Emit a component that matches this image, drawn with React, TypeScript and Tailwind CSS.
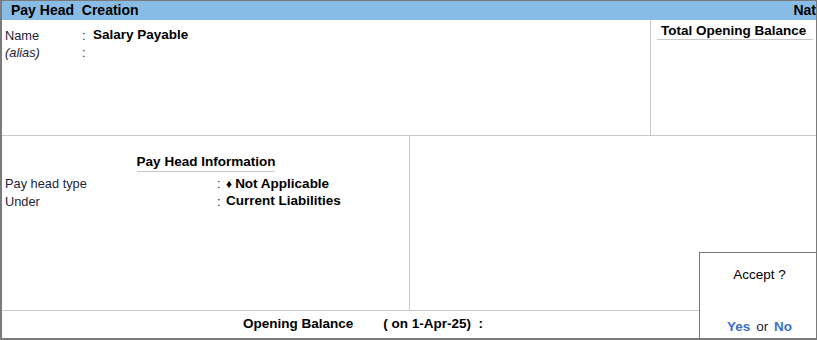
import React from "react";

const font = { fontFamily: '"Liberation Sans", Arial, sans-serif' };

function Row({ label, value, italic }: { label: string; value?: string; italic?: boolean }) {
  return (
    <div className="flex h-[17px] items-center">
      <span className={`w-[77px] text-[12.8px] text-[#1e1e3c] ${italic ? "italic" : ""}`}>{label}</span>
      <span className="w-[11px] text-[12.8px] text-[#1e1e3c]">:</span>
      {value && <span className="text-[13.5px] font-bold text-black">{value}</span>}
    </div>
  );
}

export default function App() {
  return (
    <div
      className="relative w-[817px] h-[340px] overflow-hidden bg-white border-t border-l-2 border-r border-b-2 border-[#7a7a7a] flex flex-col"
      style={font}
    >
      {/* title bar */}
      <div className="h-[19px] shrink-0 bg-[#89bce4] flex items-center justify-between pl-[9px] pr-0">
        <span className="text-[14px] font-bold text-black whitespace-pre">Pay Head  Creation</span>
        <span className="text-[14px] font-bold text-black">Nat</span>
      </div>

      {/* name area */}
      <div className="h-[116px] shrink-0 flex border-b border-[#c8c8c8]">
        <div className="flex-1 pl-[3px] pt-[7px]">
          <Row label="Name" value="Salary Payable" />
          <Row label="(alias)" italic />
        </div>
        <div className="w-[166px] border-l border-[#c8c8c8] pt-[3px] pl-[6px] pr-[3px]">
          <div className="border-b border-[#c8c8c8] pl-[4px] pb-[1px] text-[13.5px] font-bold text-black leading-[15px] whitespace-nowrap">
            Total Opening Balance
          </div>
        </div>
      </div>

      {/* info area */}
      <div className="h-[174px] shrink-0 flex">
        <div className="w-[408px] border-r border-[#c8c8c8] pl-[3px] pt-[18px]">
          <div className="flex justify-center">
            <span className="text-[13.5px] font-bold text-black border-b border-[#c8c8c8] leading-[16px] pb-[1px] mr-[2px]">
              Pay Head Information
            </span>
          </div>
          <div className="mt-[3px] flex h-[18px] items-center">
            <span className="w-[212px] text-[12.8px] text-[#1e1e3c]">Pay head type</span>
            <span className="w-[9px] text-[12.8px] text-[#1e1e3c]">:</span>
            <span className="text-[13.5px] font-bold text-black">
              <span className="text-[12px] mr-[3px]">♦</span>Not Applicable
            </span>
          </div>
          <div className="flex h-[17px] items-center">
            <span className="w-[212px] text-[12.8px] text-[#1e1e3c]">Under</span>
            <span className="w-[9px] text-[12.8px] text-[#1e1e3c]">:</span>
            <span className="text-[13.5px] font-bold text-black">Current Liabilities</span>
          </div>
        </div>
        <div className="flex-1" />
      </div>

      {/* opening balance */}
      <div className="flex-1 border-t border-[#c8c8c8] flex items-start pt-[3px] pl-[241px]">
        <span className="text-[13.5px] font-bold text-black">Opening Balance</span>
        <span className="ml-[30px] text-[13.5px] font-bold text-black whitespace-pre">( on 1-Apr-25)  :</span>
      </div>

      {/* accept prompt */}
      <div className="absolute left-[697px] top-[251px] w-[120px] h-[89px] bg-white border-t border-l border-[#7a7a7a] flex flex-col items-center">
        <div className="mt-[12px] text-[13.5px] text-black">Accept ?</div>
        <div className="mt-auto mb-[4px] text-[13.5px] font-bold text-[#3a6fc4]">
          Yes <span className="font-normal text-[#1e1e3c] mx-[2px]">or</span> No
        </div>
      </div>
    </div>
  );
}
